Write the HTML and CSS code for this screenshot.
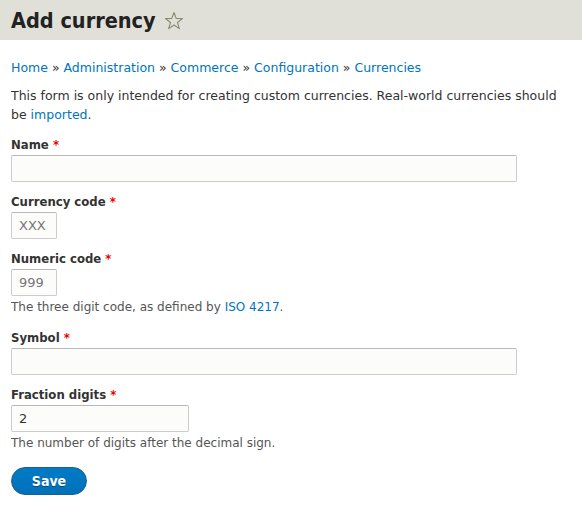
FILE: index.html
```html
<!DOCTYPE html>
<html>
<head>
<meta charset="utf-8">
<link rel="stylesheet" href="styles.css">
</head>
<body>
<header class="page-header">
  <h1 class="page-title">Add currency <svg class="star" width="20" height="20" viewBox="0 0 20 20"><path d="M10 1.5 L12.2 7.4 L18.5 7.6 L13.5 11.5 L15.3 17.6 L10 14 L4.7 17.6 L6.5 11.5 L1.5 7.6 L7.8 7.4 Z" fill="none" stroke="#8a8a6e" stroke-width="1.1" stroke-linejoin="round"/></svg></h1>
</header>
<main class="content">
  <nav class="breadcrumb"><a href="#">Home</a> » <a href="#">Administration</a> » <a href="#">Commerce</a> » <a href="#">Configuration</a> » <a href="#">Currencies</a></nav>
  <p class="intro">This form is only intended for creating custom currencies. Real-world currencies should be <a href="#">imported</a>.</p>
  <form class="form">
    <div class="field">
      <label class="label">Name <span class="req">*</span></label>
      <input class="input w-long" type="text">
    </div>
    <div class="field">
      <label class="label">Currency code <span class="req">*</span></label>
      <input class="input w-short placeholder" type="text" placeholder="XXX">
    </div>
    <div class="field field-desc">
      <label class="label">Numeric code <span class="req">*</span></label>
      <input class="input w-short" type="text" placeholder="999">
      <div class="desc">The three digit code, as defined by <a href="#">ISO 4217</a>.</div>
    </div>
    <div class="field">
      <label class="label">Symbol <span class="req">*</span></label>
      <input class="input w-long" type="text">
    </div>
    <div class="field field-desc">
      <label class="label">Fraction digits <span class="req">*</span></label>
      <input class="input w-mid" type="text" value="2">
      <div class="desc">The number of digits after the decimal sign.</div>
    </div>
    <div class="actions">
      <button class="button" type="button">Save</button>
    </div>
  </form>
</main>
</body>
</html>
```
FILE: styles.css
```css
body {
  margin: 0;
  font-family: "DejaVu Sans", "Lucida Grande", sans-serif;
  font-size: 12.5px;
  color: #333;
  background: #fff;
}
a { color: #0074bd; text-decoration: none; }
.page-header {
  background: #e0e0d8;
  height: 40px;
  padding: 0 11px;
}
.page-title {
  margin: 0;
  font-family: "DejaVu Sans Condensed", "DejaVu Sans", sans-serif;
  font-size: 21.5px;
  line-height: 42px;
  font-weight: bold;
  color: #222;
  display: flex;
  align-items: center;
  gap: 8px;
}
.star { margin-top: -1px; }
.content { padding: 0 11px; }
.breadcrumb {
  margin-top: 20px;
  line-height: 16px;
  color: #333;
}
.intro {
  margin: 10px 0 0;
  line-height: 19px;
  color: #333;
}
.form { margin-top: 13px; }
.field { margin-bottom: 12px; }
.field-desc { margin-bottom: 16px; }
.label {
  display: block;
  font-family: "DejaVu Sans Condensed", "DejaVu Sans", sans-serif;
  font-size: 13px;
  font-weight: bold;
  line-height: 16px;
  margin-bottom: 2px;
  color: #333;
}
.req { color: #e00; }
.input {
  display: block;
  box-sizing: border-box;
  height: 27px;
  border: 1px solid #ccc;
  border-top-color: #b8b8b8;
  border-radius: 2px;
  background: #fcfcfa;
  font-family: "DejaVu Sans", sans-serif;
  font-size: 13px;
  color: #333;
  padding: 0 7px;
  margin: 0;
}
.input::placeholder { color: #777; }
.w-long { width: 506px; }
.w-short { width: 46px; }
.w-mid { width: 178px; }
.desc {
  margin-top: 4px;
  font-size: 12px;
  line-height: 14px;
  color: #555;
}
.actions { margin-top: 17px; }
.button {
  display: block;
  width: 76px;
  height: 28px;
  border: 1px solid #1e5c90;
  border-radius: 20px;
  background: linear-gradient(#007bc6, #0071b8);
  color: #fff;
  font-family: "DejaVu Sans Condensed", "DejaVu Sans", sans-serif;
  font-weight: bold;
  font-size: 14px;
  padding: 0;
  text-shadow: 0 1px rgba(0,0,0,0.4);
}
```
